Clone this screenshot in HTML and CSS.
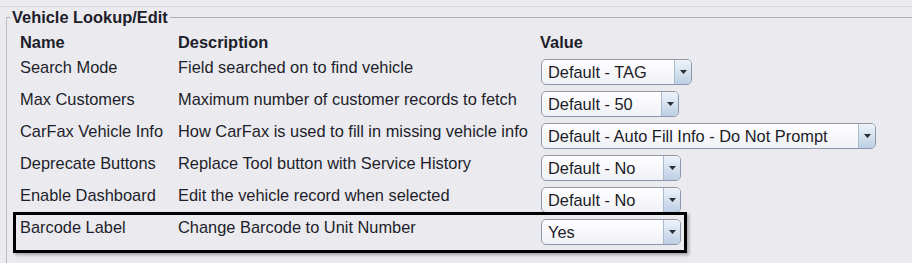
FILE: index.html
```html
<!DOCTYPE html>
<html>
<head>
<meta charset="utf-8">
<link rel="stylesheet" href="styles.css">
</head>
<body>
<div class="frame">
  <fieldset class="group">
    <legend class="group-title">Vehicle Lookup/Edit</legend>
    <div class="table">
      <div class="hd">Name</div>
      <div class="hd">Description</div>
      <div class="hd hd-value">Value</div>

      <div class="cell">Search Mode</div>
      <div class="cell">Field searched on to find vehicle</div>
      <div class="cell-val"><div class="combo w151"><span class="combo-text">Default - TAG</span><span class="combo-btn"><svg width="7" height="4" viewBox="0 0 7 4"><path d="M0 0H7L3.5 4Z" fill="#2b2b33"/></svg></span></div></div>

      <div class="cell">Max Customers</div>
      <div class="cell">Maximum number of customer records to fetch</div>
      <div class="cell-val"><div class="combo w138"><span class="combo-text">Default - 50</span><span class="combo-btn"><svg width="7" height="4" viewBox="0 0 7 4"><path d="M0 0H7L3.5 4Z" fill="#2b2b33"/></svg></span></div></div>

      <div class="cell">CarFax Vehicle Info</div>
      <div class="cell">How CarFax is used to fill in missing vehicle info</div>
      <div class="cell-val"><div class="combo w335"><span class="combo-text">Default - Auto Fill Info - Do Not Prompt</span><span class="combo-btn"><svg width="7" height="4" viewBox="0 0 7 4"><path d="M0 0H7L3.5 4Z" fill="#2b2b33"/></svg></span></div></div>

      <div class="cell">Deprecate Buttons</div>
      <div class="cell">Replace Tool button with Service History</div>
      <div class="cell-val"><div class="combo w140"><span class="combo-text">Default - No</span><span class="combo-btn"><svg width="7" height="4" viewBox="0 0 7 4"><path d="M0 0H7L3.5 4Z" fill="#2b2b33"/></svg></span></div></div>

      <div class="cell">Enable Dashboard</div>
      <div class="cell">Edit the vehicle record when selected</div>
      <div class="cell-val"><div class="combo w140"><span class="combo-text">Default - No</span><span class="combo-btn"><svg width="7" height="4" viewBox="0 0 7 4"><path d="M0 0H7L3.5 4Z" fill="#2b2b33"/></svg></span></div></div>

      <div class="cell">Barcode Label</div>
      <div class="cell">Change Barcode to Unit Number</div>
      <div class="cell-val"><div class="combo w140"><span class="combo-text">Yes</span><span class="combo-btn"><svg width="7" height="4" viewBox="0 0 7 4"><path d="M0 0H7L3.5 4Z" fill="#2b2b33"/></svg></span></div></div>

      <div class="highlight"></div>
    </div>
  </fieldset>
</div>
</body>
</html>
```

FILE: styles.css
```css
html, body {
  margin: 0;
  padding: 0;
  background: #eaeaef;
  overflow: hidden;
}

body {
  font-family: "Liberation Sans", Arial, sans-serif;
  font-size: 16.4px;
  color: #1e1e2a;
}

.frame {
  margin-top: 6px;
  border-top: 1px solid #d3d4db;
}

.group {
  margin: 0 0 0 6px;
  padding: 6px 0 30px 3px;
  border: 1px solid #a9b1be;
  border-right: 0;
  border-left-color: #b9bec8;
  min-width: 0;
}

.group-title {
  padding: 0 2px;
  font-weight: bold;
  line-height: 20px;
  color: #1e1e2a;
}

.table {
  position: relative;
  margin-left: 10px;
  display: grid;
  grid-template-columns: 158px 363px 1fr;
  row-gap: 5px;
  line-height: 19px;
}

.hd {
  font-weight: bold;
  padding-bottom: 1px;
}

.hd-value {
  padding-left: 0;
  margin-left: -1px;
}

.cell {
  white-space: nowrap;
}

.cell-val {
  padding-top: 1px;
  height: 26px;
}

.combo {
  box-sizing: border-box;
  height: 26px;
  display: flex;
  border: 1px solid #8d99ab;
  border-radius: 5px;
  background: linear-gradient(#fefeff, #f1f2f6);
  overflow: hidden;
}

.w151 { width: 151px; }
.w138 { width: 138px; }
.w335 { width: 335px; }
.w140 { width: 140px; }

.combo-text {
  flex: 1;
  padding-left: 6px;
  line-height: 24px;
  white-space: nowrap;
  color: #1c1c28;
}

.combo-btn {
  width: 16px;
  border-left: 1px solid #a9b9cc;
  background: linear-gradient(#eef3f9, #d3e0ee 55%, #bccfe4);
  display: flex;
  align-items: center;
  justify-content: center;
}

.highlight {
  position: absolute;
  left: -7px;
  top: 179px;
  width: 674px;
  height: 41px;
  box-sizing: border-box;
  border: 3px solid #000;
  box-shadow: 2px 2px 3px rgba(0, 0, 0, 0.3);
  pointer-events: none;
}
```
